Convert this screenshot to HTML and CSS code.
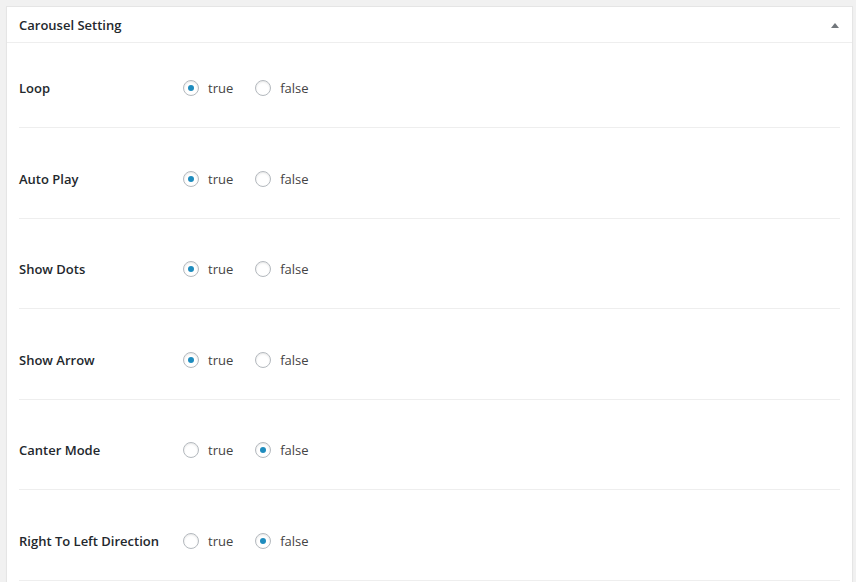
FILE: index.html
```html
<!DOCTYPE html>
<html lang="en">
  <head>
    <meta charset="UTF-8" />
    <meta name="viewport" content="width=device-width, initial-scale=1" />
    <title>Carousel Setting</title>
    <link rel="stylesheet" href="styles.css">
  </head>
  <body>
    <div class="postbox">
      <div class="postbox-header">
        <h2>Carousel Setting</h2>
        <span class="toggle-indicator"></span>
      </div>
      <div class="inside">
        <div class="setting-row">
          <div class="setting-label">Loop</div>
          <div class="setting-field">
            <label class="radio"><input type="radio" name="loop" checked /> true</label>
            <label class="radio"><input type="radio" name="loop" /> false</label>
          </div>
        </div>
        <div class="setting-row">
          <div class="setting-label">Auto Play</div>
          <div class="setting-field">
            <label class="radio"><input type="radio" name="autoplay" checked /> true</label>
            <label class="radio"><input type="radio" name="autoplay" /> false</label>
          </div>
        </div>
        <div class="setting-row">
          <div class="setting-label">Show Dots</div>
          <div class="setting-field">
            <label class="radio"><input type="radio" name="dots" checked /> true</label>
            <label class="radio"><input type="radio" name="dots" /> false</label>
          </div>
        </div>
        <div class="setting-row">
          <div class="setting-label">Show Arrow</div>
          <div class="setting-field">
            <label class="radio"><input type="radio" name="arrow" checked /> true</label>
            <label class="radio"><input type="radio" name="arrow" /> false</label>
          </div>
        </div>
        <div class="setting-row">
          <div class="setting-label">Canter Mode</div>
          <div class="setting-field">
            <label class="radio"><input type="radio" name="center" /> true</label>
            <label class="radio"><input type="radio" name="center" checked /> false</label>
          </div>
        </div>
        <div class="setting-row">
          <div class="setting-label">Right To Left Direction</div>
          <div class="setting-field">
            <label class="radio"><input type="radio" name="rtl" /> true</label>
            <label class="radio"><input type="radio" name="rtl" checked /> false</label>
          </div>
        </div>
      </div>
    </div>
  </body>
</html>
```

FILE: styles.css
```css
* { box-sizing: border-box; }
html, body {
  margin: 0;
  padding: 0;
  background: #f1f1f1;
  font-family: "Open Sans", "Noto Sans", sans-serif;
  color: #23282d;
  font-size: 13px;
}
body { padding: 6px 3px 0 6px; }
.postbox {
  background: #fff;
  border: 1px solid #e5e5e5;
  border-bottom: none;
  box-shadow: 0 1px 1px rgba(0, 0, 0, 0.04);
  height: 600px;
}
.postbox-header {
  display: flex;
  align-items: center;
  justify-content: space-between;
  height: 36px;
  padding: 0 13px 0 12px;
  border-bottom: 1px solid #eee;
}
.postbox-header h2 {
  margin: 0;
  font-size: 13px;
  font-weight: 600;
  line-height: 20px;
}
.toggle-indicator {
  width: 0;
  height: 0;
  border-left: 4px solid transparent;
  border-right: 4px solid transparent;
  border-bottom: 5px solid #72777c;
  margin-top: 1px;
}
.inside { padding: 0 12px; }
.setting-row {
  display: flex;
  align-items: center;
  padding: 40.5px 0 29.1px;
  line-height: 20px;
  border-bottom: 1px solid #eee;
}
.setting-row:first-child { padding: 35px 0 29px; }
.setting-label {
  width: 164px;
  font-weight: 600;
}
.setting-field {
  display: flex;
  gap: 22px;
  color: #444;
}
.radio {
  display: flex;
  align-items: center;
  gap: 9px;
  cursor: pointer;
}
.radio input {
  -webkit-appearance: none;
  appearance: none;
  margin: 0;
  width: 16px;
  height: 16px;
  border: 1px solid #b4b9be;
  border-radius: 50%;
  background: #fff;
  box-shadow: inset 0 1px 2px rgba(0, 0, 0, 0.1);
  display: flex;
  align-items: center;
  justify-content: center;
}
.radio input:checked::before {
  content: "";
  width: 6px;
  height: 6px;
  border-radius: 50%;
  background: #1e8cbe;
}
```
